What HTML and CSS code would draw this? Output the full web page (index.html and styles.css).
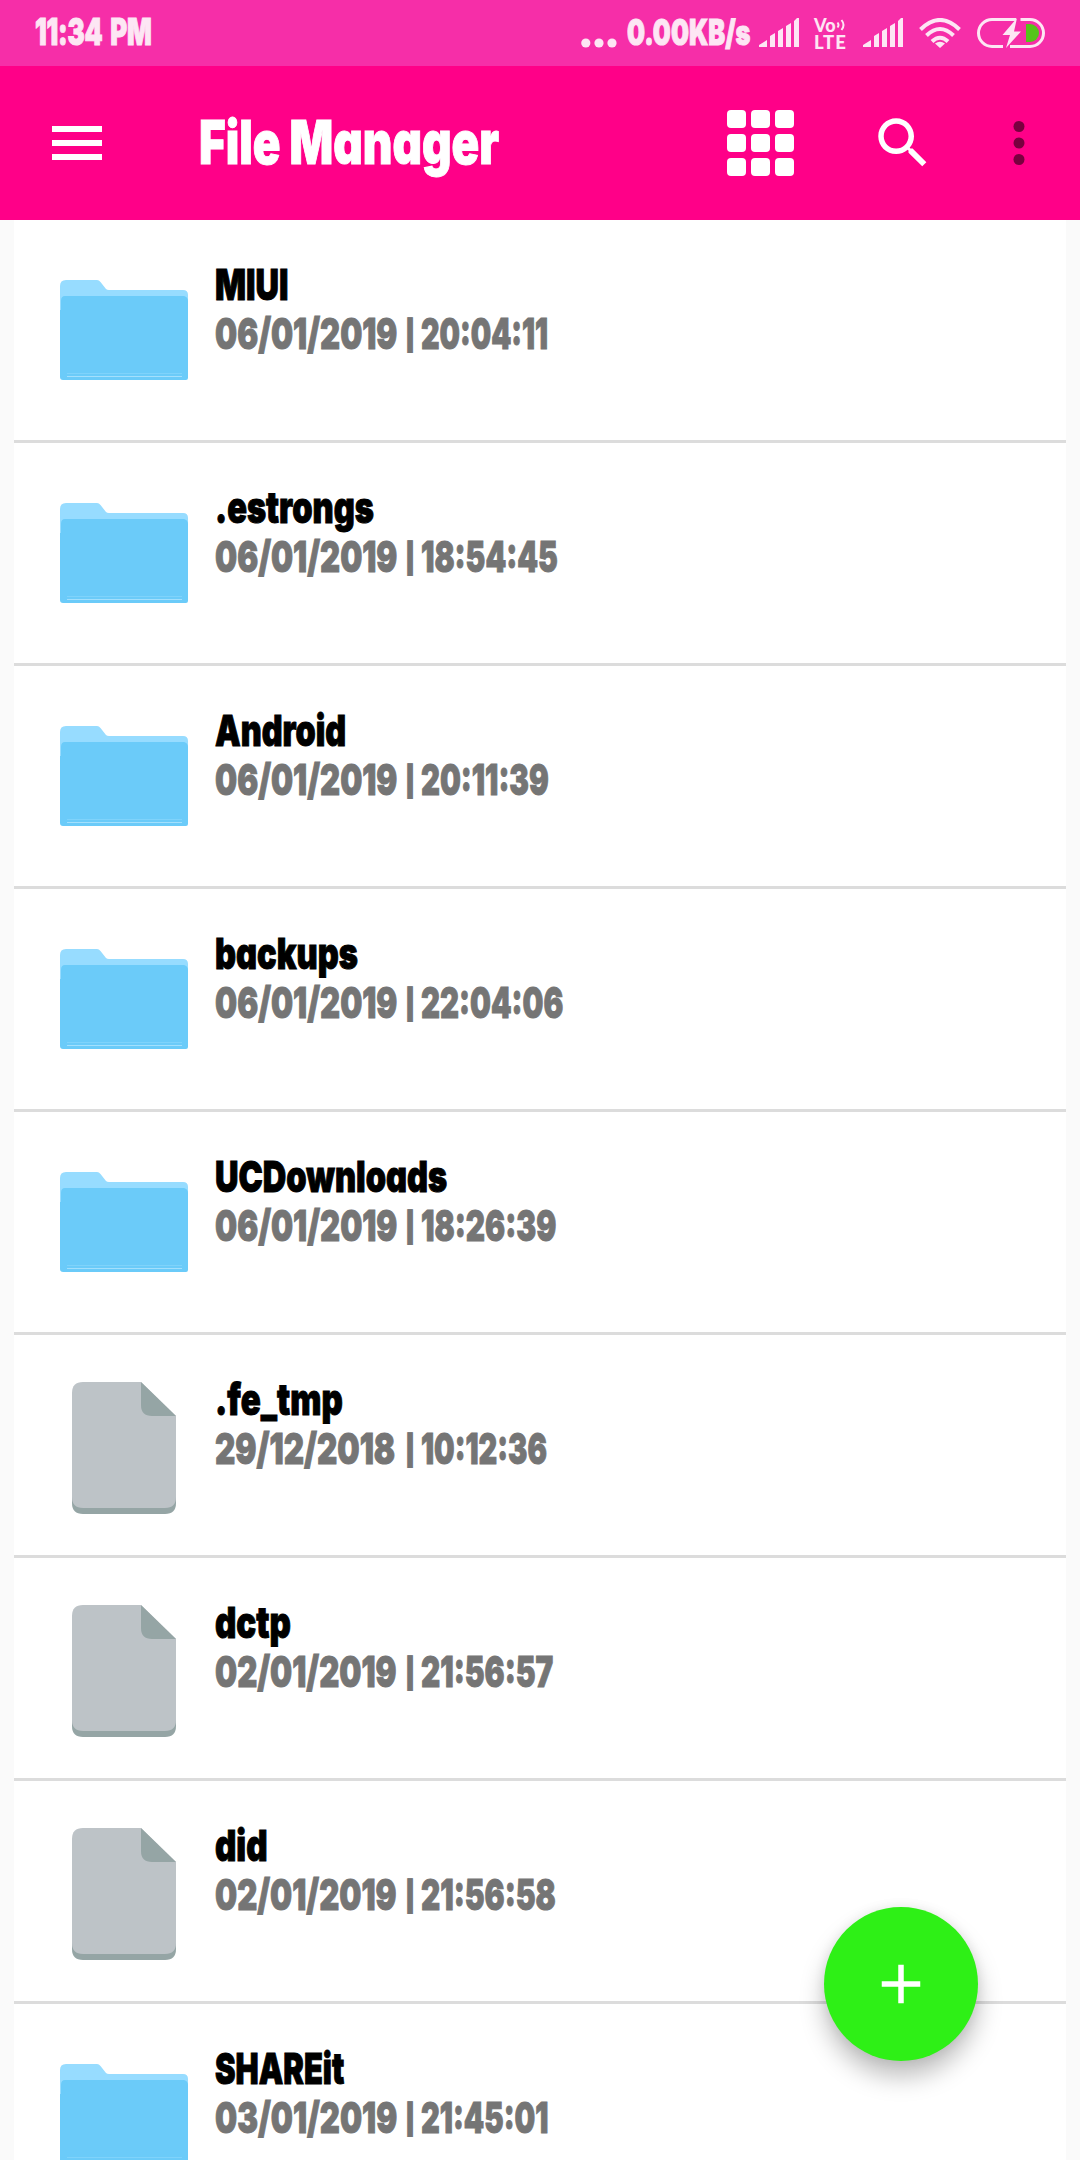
FILE: index.html
```html
<!DOCTYPE html>
<html lang="en">
<head>
<meta charset="utf-8">
<title>File Manager</title>
<link rel="stylesheet" href="styles.css">
</head>
<body>
<svg width="0" height="0" class="defs">
  <symbol id="folder" viewBox="0 0 128 100">
    <path d="M0 6Q0 0 6 0H37Q39 0 40.500 2L46 9Q47 10 49 10H123Q128 10 128 15V60H0Z" fill="#97dcff"/>
    <path d="M1 21Q1 16 5 16H124Q128 17 128 21V98Q128 100 126 100H3Q0 100 0 97V30H1Z" fill="#6bcbf9"/>
    <path d="M7 93.500H122" stroke="#7fd3fb" stroke-width="1"/>
    <path d="M7 96.500H122" stroke="#a3e0fd" stroke-width="1.200"/>
  </symbol>
  <symbol id="file" viewBox="0 0 104 132">
    <path d="M0 40H104V121Q104 132 93 132H11Q0 132 0 121Z" fill="#95a5a5"/>
    <path d="M11 0H69L104 34V115Q104 126 93 126H11Q0 126 0 115V11Q0 0 11 0Z" fill="#bdc3c7"/>
    <path d="M69 0L104 34H80Q69 34 69 23Z" fill="#95a5a5"/>
  </symbol>
  <symbol id="signal" viewBox="0 0 40 29">
    <path d="M0 29V27L8 22V29ZM11 29V18L16 15V29ZM19 29V13L24 10V29ZM27 29V8L32 5V29ZM35 29V3L38 0H40V29Z"/>
  </symbol>
</svg>

<header class="statusbar">
  <span class="time"><span class="fit" style="--sx:.7">11:34 PM</span></span>
  <svg class="dots" width="36" height="10" viewBox="0 0 36 10"><circle cx="4.800" cy="5" r="4.600"/><circle cx="18" cy="5" r="4.600"/><circle cx="31" cy="5" r="4.600"/></svg>
  <span class="speed"><span class="fit" style="--sx:.725">0.00KB/s</span></span>
  <svg class="signal" width="40" height="29"><use href="#signal"/></svg>
  <span class="volte">
    <span class="vo">Vo<svg width="10" height="14" viewBox="0 0 10 14"><path d="M1.500 4.500Q3.500 7 1.500 9.500M5.500 2Q9.500 7 5.500 12" fill="none" stroke="#fde6f4" stroke-width="2"/></svg></span>
    <span class="lte">LTE</span>
  </span>
  <svg class="signal" width="40" height="29"><use href="#signal"/></svg>
  <svg class="wifi" width="42" height="30" viewBox="0 0 42 30">
    <g fill="none" stroke="#fde6f4" stroke-width="4"><path d="M1.500 11.500Q21 -7.500 40.500 11.500"/><path d="M7.500 17.500Q21 4.500 34.500 17.500"/><path d="M13 23.500Q21 16 29 23.500"/></g>
    <path d="M21 30L16 25.500Q21 22 26 25.500Z"/>
  </svg>
  <svg class="battery" width="68" height="30" viewBox="0 0 68 30">
    <path d="M39 1.500H15A13.500 13.500 0 0 0 15 28.500H26M43.500 1.500H53A13.500 13.500 0 0 1 53 28.500H33" fill="none" stroke="#fde6f4" stroke-width="3"/>
    <path d="M40 0L25.500 17H33L29 30L44 13.500H37Z"/>
    <path d="M49 6H53A9 9 0 0 1 53 24H49Z" fill="#55c41a"/>
  </svg>
</header>

<nav class="toolbar">
  <svg class="menu" width="50" height="34" viewBox="0 0 50 34"><path d="M0 0H50V6H0ZM0 14H50V20H0ZM0 28H50V34H0Z"/></svg>
  <h1 class="title"><span class="fit" style="--sx:.762">File Manager</span></h1>
  <span class="grid"><i></i><i></i><i></i><i></i><i></i><i></i><i></i><i></i><i></i></span>
  <svg class="search" width="66" height="66" viewBox="0 0 24 24"><path d="M15.500 14h-.79l-.28-.27C15.410 12.590 16 11.110 16 9.500 16 5.910 13.090 3 9.500 3S3 5.910 3 9.500 5.910 16 9.500 16c1.610 0 3.090-.59 4.230-1.570l.27.28v.79l5 4.990L20.490 19l-4.990-5zm-6 0C7.010 14 5 11.990 5 9.500S7.010 5 9.500 5 14 7.010 14 9.500 11.990 14 9.500 14z"/></svg>
  <svg class="more" width="66" height="66" viewBox="0 0 24 24"><circle cx="12" cy="6" r="2"/><circle cx="12" cy="12" r="2"/><circle cx="12" cy="18" r="2"/></svg>
</nav>

<main class="list">
  <article class="row"><span class="icon"><svg width="128" height="100"><use href="#folder"/></svg></span><div class="info"><div class="name"><span class="fit" style="--sx:.755">MIUI</span></div><div class="date"><span class="day"><span class="fit" style="--sx:.724">06/01/2019</span></span><span class="bar">|</span><span class="fit" style="--sx:.668">20:04:11</span></div></div></article>
  <article class="row"><span class="icon"><svg width="128" height="100"><use href="#folder"/></svg></span><div class="info"><div class="name"><span class="fit" style="--sx:.758">.estrongs</span></div><div class="date"><span class="day"><span class="fit" style="--sx:.724">06/01/2019</span></span><span class="bar">|</span><span class="fit" style="--sx:.69">18:54:45</span></div></div></article>
  <article class="row"><span class="icon"><svg width="128" height="100"><use href="#folder"/></svg></span><div class="info"><div class="name"><span class="fit" style="--sx:.752">Android</span></div><div class="date"><span class="day"><span class="fit" style="--sx:.724">06/01/2019</span></span><span class="bar">|</span><span class="fit" style="--sx:.683">20:11:39</span></div></div></article>
  <article class="row"><span class="icon"><svg width="128" height="100"><use href="#folder"/></svg></span><div class="info"><div class="name"><span class="fit" style="--sx:.758">backups</span></div><div class="date"><span class="day"><span class="fit" style="--sx:.724">06/01/2019</span></span><span class="bar">|</span><span class="fit" style="--sx:.684">22:04:06</span></div></div></article>
  <article class="row"><span class="icon"><svg width="128" height="100"><use href="#folder"/></svg></span><div class="info"><div class="name"><span class="fit" style="--sx:.757">UCDownloads</span></div><div class="date"><span class="day"><span class="fit" style="--sx:.724">06/01/2019</span></span><span class="bar">|</span><span class="fit" style="--sx:.693">18:26:39</span></div></div></article>
  <article class="row"><span class="icon doc"><svg width="104" height="132"><use href="#file"/></svg></span><div class="info"><div class="name"><span class="fit" style="--sx:.768">.fe_tmp</span></div><div class="date"><span class="day"><span class="fit" style="--sx:.731">29/12/2018</span></span><span class="bar">|</span><span class="fit" style="--sx:.673">10:12:36</span></div></div></article>
  <article class="row"><span class="icon doc"><svg width="104" height="132"><use href="#file"/></svg></span><div class="info"><div class="name"><span class="fit" style="--sx:.77">dctp</span></div><div class="date"><span class="day"><span class="fit" style="--sx:.724">02/01/2019</span></span><span class="bar">|</span><span class="fit" style="--sx:.692">21:56:57</span></div></div></article>
  <article class="row"><span class="icon doc"><svg width="104" height="132"><use href="#file"/></svg></span><div class="info"><div class="name"><span class="fit" style="--sx:.77">did</span></div><div class="date"><span class="day"><span class="fit" style="--sx:.724">02/01/2019</span></span><span class="bar">|</span><span class="fit" style="--sx:.692">21:56:58</span></div></div></article>
  <article class="row"><span class="icon"><svg width="128" height="100"><use href="#folder"/></svg></span><div class="info"><div class="name"><span class="fit" style="--sx:.718">SHAREit</span></div><div class="date"><span class="day"><span class="fit" style="--sx:.724">03/01/2019</span></span><span class="bar">|</span><span class="fit" style="--sx:.677">21:45:01</span></div></div></article>
</main>

<button class="fab" aria-label="Add"><svg width="66" height="66" viewBox="0 0 24 24"><path d="M19 13h-6v6h-2v-6H5v-2h6V5h2v6h6v2z"/></svg></button>
</body>
</html>
```
FILE: styles.css
```css
* { box-sizing: border-box; }

body {
  margin: 0;
  width: 1080px;
  height: 2160px;
  overflow: hidden;
  display: flex;
  flex-direction: column;
  background: #fafafa;
  font-family: Inter, "Liberation Sans", sans-serif;
  font-weight: 900;
  font-feature-settings: "cv11";
}

svg { display: block; flex: none; fill: currentColor; }
.defs { display: none; }

/* condensed lettering: each string is squeezed from its left edge */
.fit {
  display: inline-block;
  white-space: nowrap;
  transform: scaleX(var(--sx));
  transform-origin: 0 50%;
  -webkit-text-stroke: 1px currentColor;
}

.statusbar {
  flex: none;
  height: 66px;
  display: flex;
  align-items: flex-start;
  padding: 18px 35px 0;
  background: #f62ea8;
  color: #fde6f4;
}
.time { width: 546px; font-size: 37px; line-height: 27px; word-spacing: 4px; letter-spacing: -.3px; }
.dots { margin-top: 20px; }
.speed { width: 125px; margin-left: 10px; font-size: 35px; line-height: 29px; }
.signal { margin-left: 7px; }
.volte {
  width: 34px;
  margin-left: 15px;
  display: flex;
  flex-direction: column;
  gap: 3px;
  font: 900 18px/14px Lato, sans-serif;
}
.volte + .signal { margin-left: 15px; }
.vo { display: flex; }
.lte { font-size: 18.5px; letter-spacing: 1px; }
.wifi { margin-left: 16px; }
.battery { margin-left: 16px; }

.toolbar {
  flex: none;
  height: 154px;
  display: flex;
  align-items: center;
  padding: 0 28px 0 52px;
  background: #ff0088;
  color: #fff;
}
.title { margin: -2px 0 0 97px; width: 528px; font-size: 60px; line-height: 60px; font-weight: 900; }
.grid {
  display: grid;
  grid-template-columns: repeat(3, 18.5px);
  gap: 5.5px;
}
.grid i { height: 18.5px; border-radius: 4px; background: #fff; }
.search { margin-left: 76px; }
.more { margin-left: 50px; color: #79003f; }

.list { flex: 1; margin: 0 14px; background: #fff; overflow: hidden; }
.row {
  display: flex;
  height: 223px;
  border-bottom: 3px solid #dcdcdc;
}
.icon { flex: none; width: 128px; margin: 60px 27px 0 46px; }
.doc { margin-top: 47px; padding-left: 12px; }
.info { width: 600px; padding-top: 40px; font-size: 43px; line-height: 49px; }
.name { color: #000; }
.date { display: flex; color: #757575; }
.day { width: 186px; }
.bar { width: 18px; margin-right: 2px; padding-top: 2px; font-size: 30px; text-align: center; }

.fab {
  position: absolute;
  left: 824px;
  top: 1907px;
  width: 154px;
  height: 154px;
  display: flex;
  align-items: center;
  justify-content: center;
  border: 0;
  border-radius: 50%;
  background: #2ef016;
  color: #fff;
  box-shadow: 0 16px 24px rgba(0, 0, 0, .25), 0 0 12px rgba(0, 0, 0, .08);
}
```
